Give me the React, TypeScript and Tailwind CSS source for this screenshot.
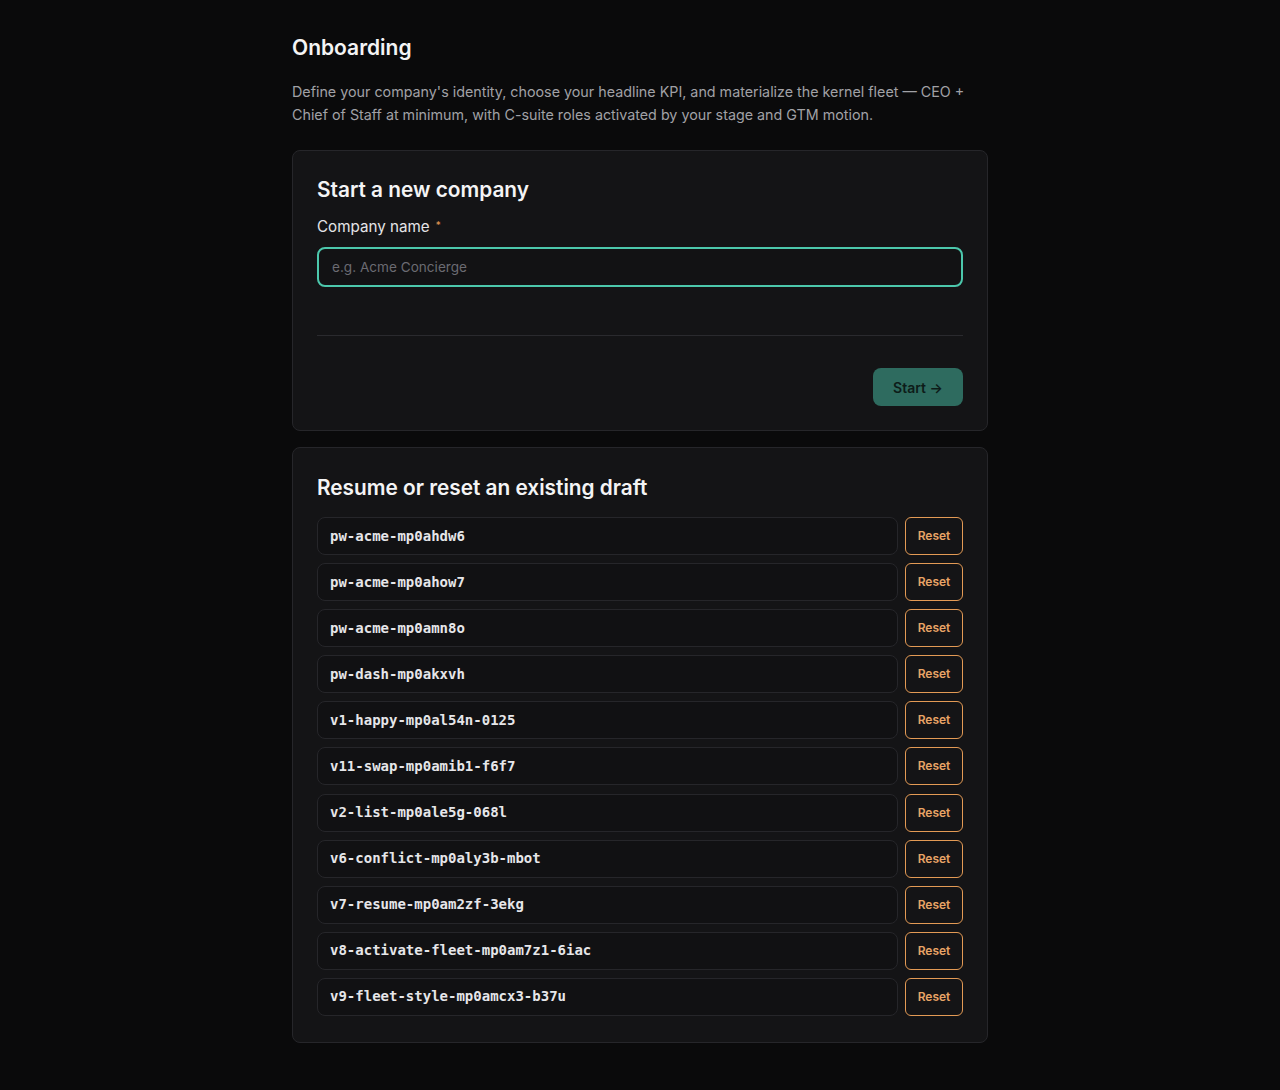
const drafts = [
  "pw-acme-mp0ahdw6",
  "pw-acme-mp0ahow7",
  "pw-acme-mp0amn8o",
  "pw-dash-mp0akxvh",
  "v1-happy-mp0al54n-0125",
  "v11-swap-mp0amib1-f6f7",
  "v2-list-mp0ale5g-068l",
  "v6-conflict-mp0aly3b-mbot",
  "v7-resume-mp0am2zf-3ekg",
  "v8-activate-fleet-mp0am7z1-6iac",
  "v9-fleet-style-mp0amcx3-b37u",
];

function DraftRow({ id }: { id: string }) {
  return (
    <div className="flex gap-[7px]">
      <button className="flex-1 h-[38px] flex items-center px-3 rounded-lg border border-[#26262a] bg-[#111113] text-left font-['DejaVu_Sans_Mono',monospace] text-[14px] font-bold text-[#e6e6e9]">
        {id}
      </button>
      <button className="w-[58px] h-[38px] rounded-md border border-[#e39a55] text-[12px] font-semibold text-[#e8a466]">
        Reset
      </button>
    </div>
  );
}

export default function App() {
  return (
    <div className="min-h-screen bg-[#0a0a0b] font-['Inter',sans-serif] text-[#f4f4f5]">
      <div className="w-[696px] mx-auto pt-8 pb-12">
        <h1 className="text-[21px] leading-8 font-semibold">Onboarding</h1>
        <p className="mt-4 text-[14.3px] leading-[23px] text-[#a1a1a6]">
          Define your company's identity, choose your headline KPI, and
          materialize the kernel fleet — CEO + Chief of Staff at minimum, with
          C-suite roles activated by your stage and GTM motion.
        </p>

        <section className="mt-6 rounded-lg border border-[#26262a] bg-[#141416] p-6">
          <h2 className="text-[20.8px] leading-[30px] font-semibold">
            Start a new company
          </h2>
          <label className="mt-2.5 flex items-start gap-1.5 text-[15.2px] leading-6 text-[#e4e4e7]">
            Company name
            <span className="text-[10px] leading-5 text-[#e39a55]">*</span>
          </label>
          <input
            className="mt-2 w-full h-10 rounded-lg border-2 border-[#4cc7ac] bg-[#121214] px-[13px] text-[13.6px] text-[#e4e4e7] placeholder:text-[#6b6b72] outline-none"
            placeholder="e.g. Acme Concierge"
          />
          <div className="mt-12 border-t border-[#2a2a2e]" />
          <div className="mt-8 flex justify-end">
            <button className="w-[90px] h-[38px] rounded-lg bg-[#2e6b5f] text-[14px] font-semibold text-[#0d1c19]">
              Start →
            </button>
          </div>
        </section>

        <section className="mt-4 rounded-lg border border-[#26262a] bg-[#141416] px-6 pt-[25px] pb-[26px]">
          <h2 className="text-[20.8px] leading-[30px] font-semibold">
            Resume or reset an existing draft
          </h2>
          <div className="mt-3.5 flex flex-col gap-[8.1px]">
            {drafts.map((d) => (
              <DraftRow key={d} id={d} />
            ))}
          </div>
        </section>
      </div>
    </div>
  );
}
